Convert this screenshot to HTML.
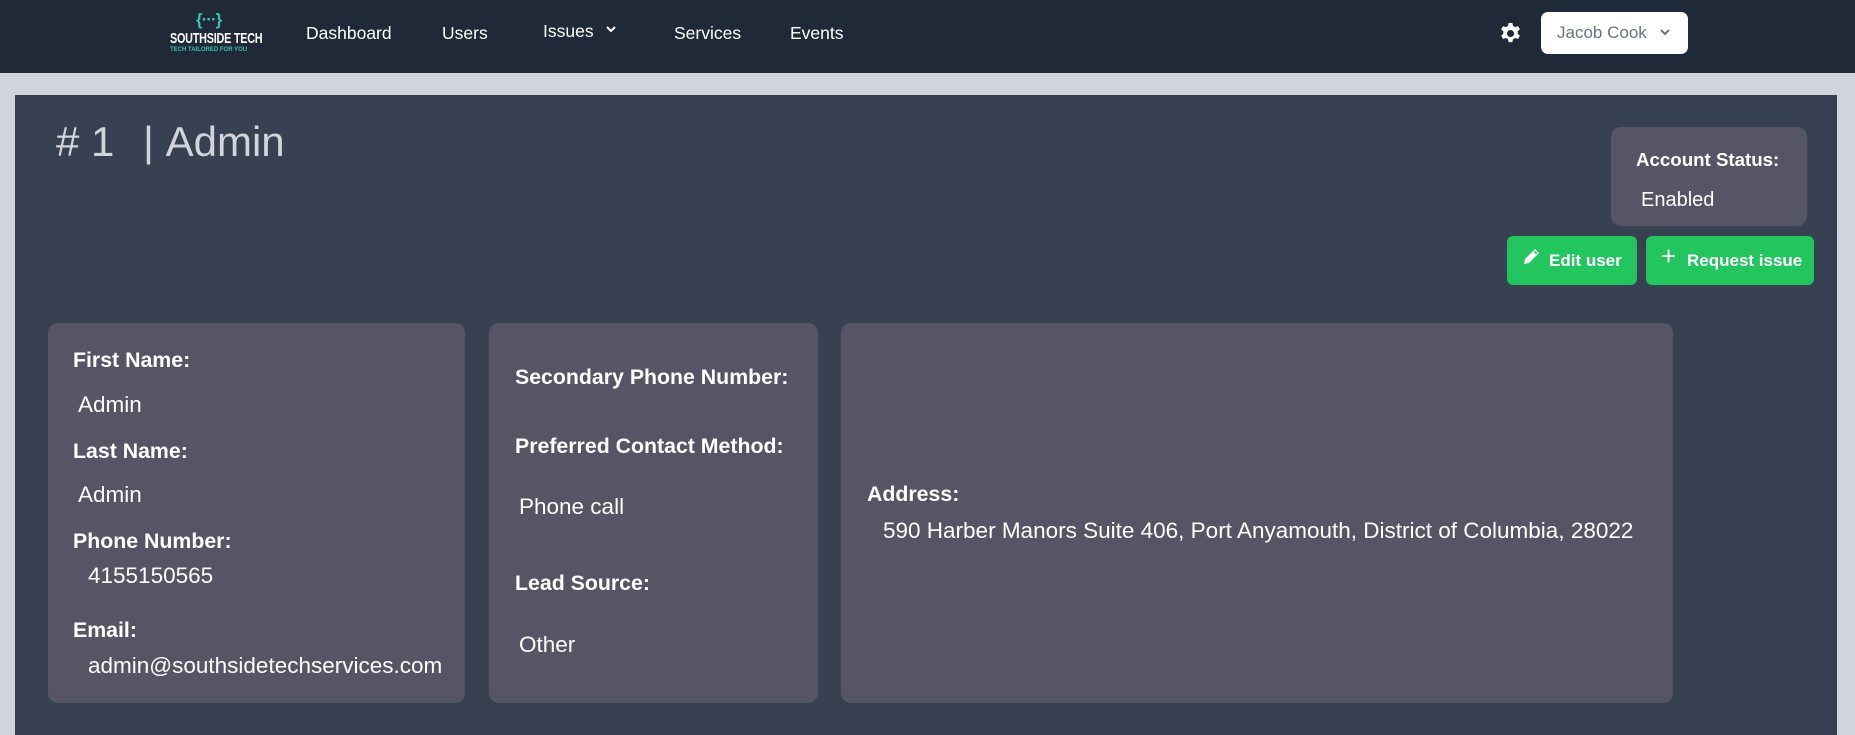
<!DOCTYPE html>
<html><head><meta charset="utf-8"><style>
*{margin:0;padding:0;box-sizing:border-box}
body{width:1855px;height:719px;overflow:hidden;background:#d1d5db;font-family:"Liberation Sans",sans-serif;position:relative}
.nav{position:absolute;left:0;top:0;width:1855px;height:73px;background:#1f2937}
.a{position:absolute;white-space:nowrap}
.nl{color:#fff;font-size:17.5px;top:23px}
.panel{position:absolute;left:15px;top:95px;width:1822px;height:640px;background:#374151}
.card{position:absolute;top:323px;height:380px;background:#555566;border-radius:10px}
.b{color:#fff;font-weight:bold;font-size:21.3px}
.t{color:#fff;font-size:22.5px}
.btn{position:absolute;top:236px;height:49px;background:#22c55e;border-radius:6px;color:#fff;font-weight:bold;font-size:17px}
</style></head><body>
<div class="nav"></div>
<div class="a" style="left:196px;top:10px;color:#3fc1b0;font-size:17px;font-weight:bold;letter-spacing:-1px">{···}</div>
<div class="a" style="left:170px;top:30px;color:#fff;font-size:15px;font-weight:bold;transform:scaleX(0.72);transform-origin:left;letter-spacing:-0.3px">SOUTHSIDE TECH</div>
<div class="a" style="left:170px;top:47px;color:#3fc1b0;font-size:6px;font-weight:bold">TECH TAILORED FOR YOU</div>
<div class="a nl" style="left:306px">Dashboard</div>
<div class="a nl" style="left:442px">Users</div>
<div class="a nl" style="left:543px;top:21px">Issues</div>
<svg class="a" style="left:605px;top:25px" width="12" height="10" viewBox="0 0 12 10"><path d="M2 2l4 4 4-4" stroke="#fff" stroke-width="2" fill="none"/></svg>
<div class="a nl" style="left:674px">Services</div>
<div class="a nl" style="left:790px">Events</div>
<svg class="a" style="left:1499px;top:22px" width="23" height="23" viewBox="0 0 24 24"><path fill="#fff" fill-rule="evenodd" d="M10 1h4l.6 3 2.3 1.3 2.9-1 2 3.4-2.3 2v2.6l2.3 2-2 3.4-2.9-1-2.3 1.3-.6 3h-4l-.6-3-2.3-1.3-2.9 1-2-3.4 2.3-2v-2.6l-2.3-2 2-3.4 2.9 1L9.4 4zM12 8.3a3.7 3.7 0 1 0 0 7.4 3.7 3.7 0 1 0 0-7.4z"/></svg>
<div class="a" style="left:1541px;top:12px;width:147px;height:42px;background:#fff;border-radius:7px"></div>
<div class="a" style="left:1557px;top:23px;color:#6b7280;font-size:17px">Jacob Cook</div>
<svg class="a" style="left:1659px;top:28px" width="12" height="10" viewBox="0 0 12 10"><path d="M2 2l4 4 4-4" stroke="#6b7280" stroke-width="2" fill="none"/></svg>
<div class="panel"></div>
<div class="a" style="left:56px;top:118px;color:#d1d5db;font-size:42px">#&nbsp;1</div>
<div class="a" style="left:143px;top:118px;color:#d1d5db;font-size:42px">|&nbsp;Admin</div>
<div class="a" style="left:1611px;top:127px;width:196px;height:99px;background:#555566;border-radius:10px"></div>
<div class="a" style="left:1636px;top:149px;font-size:18.7px;color:#fff;font-weight:bold">Account Status:</div>
<div class="a" style="left:1641px;top:189px;font-size:20px;color:#fff">Enabled</div>
<div class="btn" style="left:1507px;width:130px">
<svg class="a" style="left:14px;top:11px" width="20" height="20" viewBox="0 0 20 20"><path fill="#fff" d="M14 2l4 4-10 10-5 1 1-5zM12.6 4.8l2.6 2.6 1-1-2.6-2.6z"/></svg>
<span class="a" style="left:42px;top:15px">Edit user</span></div>
<div class="btn" style="left:1646px;width:168px">
<span class="a" style="left:15px;top:5px;font-size:26px;font-weight:normal">+</span>
<span class="a" style="left:41px;top:15px">Request issue</span></div>
<div class="card" style="left:48px;width:417px"></div>
<div class="card" style="left:489px;width:329px"></div>
<div class="card" style="left:841px;width:832px"></div>
<div class="a b" style="left:73px;top:348px">First Name:</div>
<div class="a t" style="left:78px;top:392px">Admin</div>
<div class="a b" style="left:73px;top:439px">Last Name:</div>
<div class="a t" style="left:78px;top:482px">Admin</div>
<div class="a b" style="left:73px;top:529px">Phone Number:</div>
<div class="a t" style="left:88px;top:563px">4155150565</div>
<div class="a b" style="left:73px;top:618px">Email:</div>
<div class="a t" style="left:88px;top:653px">admin@southsidetechservices.com</div>
<div class="a b" style="left:515px;top:365px">Secondary Phone Number:</div>
<div class="a b" style="left:515px;top:434px">Preferred Contact Method:</div>
<div class="a t" style="left:519px;top:494px">Phone call</div>
<div class="a b" style="left:515px;top:571px">Lead Source:</div>
<div class="a t" style="left:519px;top:632px">Other</div>
<div class="a b" style="left:867px;top:482px">Address:</div>
<div class="a t" style="left:883px;top:518px">590 Harber Manors Suite 406, Port Anyamouth, District of Columbia, 28022</div>
</body></html>
